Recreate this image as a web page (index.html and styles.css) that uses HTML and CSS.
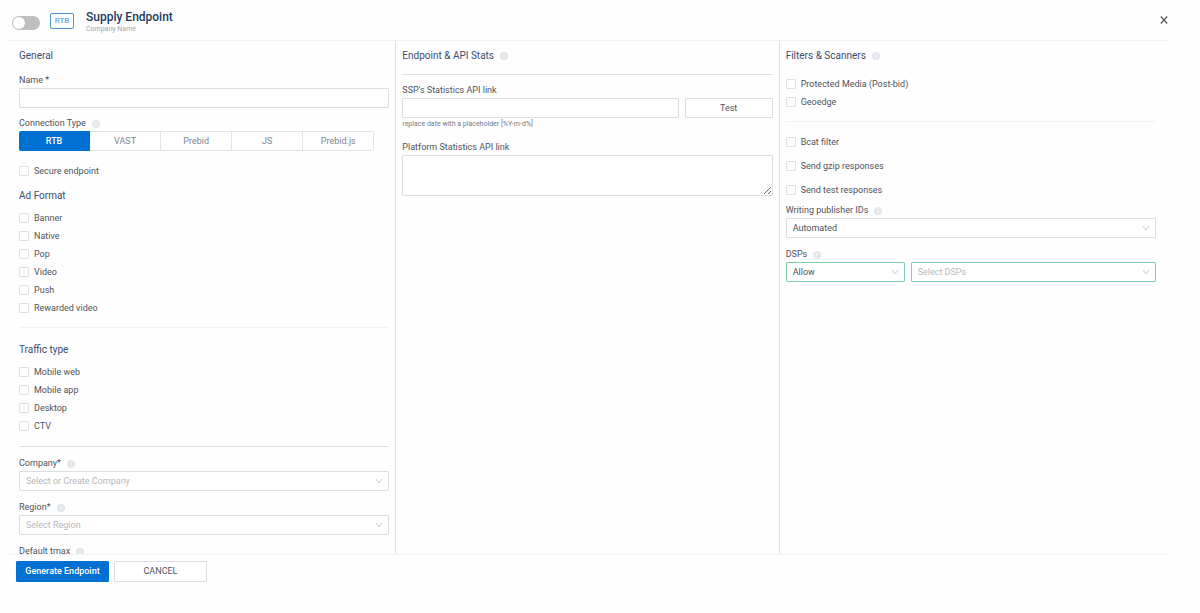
FILE: index.html
```html
<!DOCTYPE html>
<html lang="en">
<head>
<meta charset="utf-8">
<title>Supply Endpoint</title>
<link rel="stylesheet" href="styles.css">
</head>
<body>
<svg class="sprite" aria-hidden="true">
  <symbol id="info" viewBox="0 0 8 8"><circle cx="4" cy="4" r="4" fill="#e4e6e9"/><path d="M4 3.6v2.2M4 2v.9" stroke="#fff" stroke-width=".8"/></symbol>
  <symbol id="chevron" viewBox="0 0 8 8"><path d="M1 2l3 4 3-4" fill="none" stroke="#bfbfbf" stroke-width=".8"/></symbol>
</svg>
<form class="drawer">
  <header class="header">
    <input class="switch" type="checkbox" role="switch" aria-label="Active">
    <span class="badge">RTB</span>
    <div class="titles">
      <h1 class="title">Supply Endpoint</h1>
      <p class="company">Company Name</p>
    </div>
    <button class="close" type="button" aria-label="Close"><svg class="close-icon" viewBox="0 0 8 8"><path d="M.8 .5l6.4 7M7.2 .5l-6.4 7" stroke="#555" stroke-width="1.2"/></svg></button>
  </header>

  <main class="columns">
    <section class="column column-first">
      <h2 class="heading">General</h2>
      <div class="field">
        <label class="label" for="name">Name *</label>
        <input class="control" id="name" type="text">
      </div>
      <div class="field field-close">
        <span class="label" id="conn">Connection Type <svg class="info"><use href="#info"/></svg></span>
        <div class="segments" role="group" aria-labelledby="conn">
          <button class="segment segment-active" type="button">RTB</button>
          <button class="segment" type="button">VAST</button>
          <button class="segment" type="button">Prebid</button>
          <button class="segment" type="button">JS</button>
          <button class="segment" type="button">Prebid.js</button>
        </div>
      </div>
      <div class="checks checks-wide">
        <label class="check"><input class="box" type="checkbox">Secure endpoint</label>
      </div>
      <h2 class="heading heading-next">Ad Format</h2>
      <div class="checks">
        <label class="check"><input class="box" type="checkbox">Banner</label>
        <label class="check"><input class="box" type="checkbox">Native</label>
        <label class="check"><input class="box" type="checkbox">Pop</label>
        <label class="check"><input class="box" type="checkbox">Video</label>
        <label class="check"><input class="box" type="checkbox">Push</label>
        <label class="check"><input class="box" type="checkbox">Rewarded video</label>
      </div>
      <hr class="rule rule-faint">
      <h2 class="heading heading-ruled">Traffic type</h2>
      <div class="checks">
        <label class="check"><input class="box" type="checkbox">Mobile web</label>
        <label class="check"><input class="box" type="checkbox">Mobile app</label>
        <label class="check"><input class="box" type="checkbox">Desktop</label>
        <label class="check"><input class="box" type="checkbox">CTV</label>
      </div>
      <hr class="rule rule-wide">
      <div class="field">
        <label class="label" for="company">Company* <svg class="info"><use href="#info"/></svg></label>
        <div class="select"><select class="control placeholder" id="company"><option>Select or Create Company</option></select><svg class="chevron"><use href="#chevron"/></svg></div>
      </div>
      <div class="field">
        <label class="label" for="region">Region* <svg class="info"><use href="#info"/></svg></label>
        <div class="select"><select class="control placeholder" id="region"><option>Select Region</option></select><svg class="chevron"><use href="#chevron"/></svg></div>
      </div>
      <div class="field">
        <label class="label" for="tmax">Default tmax <svg class="info"><use href="#info"/></svg></label>
        <input class="control" id="tmax" type="text">
      </div>
    </section>

    <section class="column">
      <h2 class="heading">Endpoint &amp; API Stats <svg class="info"><use href="#info"/></svg></h2>
      <hr class="rule">
      <div class="field field-close">
        <label class="label" for="ssp">SSP's Statistics API link</label>
        <div class="row">
          <input class="control" id="ssp" type="text">
          <button class="control test" type="button">Test</button>
        </div>
        <p class="hint">replace date with a placeholder [%Y-m-d%]</p>
      </div>
      <div class="field">
        <label class="label" for="platform">Platform Statistics API link</label>
        <textarea class="control area" id="platform"></textarea>
      </div>
    </section>

    <section class="column column-last">
      <h2 class="heading">Filters &amp; Scanners <svg class="info"><use href="#info"/></svg></h2>
      <div class="checks checks-wide">
        <label class="check"><input class="box" type="checkbox">Protected Media (Post-bid)</label>
        <label class="check"><input class="box" type="checkbox">Geoedge</label>
      </div>
      <hr class="rule rule-faint">
      <div class="checks checks-wide checks-spaced">
        <label class="check"><input class="box" type="checkbox">Bcat filter</label>
        <label class="check"><input class="box" type="checkbox">Send gzip responses</label>
        <label class="check"><input class="box" type="checkbox">Send test responses</label>
      </div>
      <div class="field field-tight">
        <label class="label" for="pub">Writing publisher IDs <svg class="info"><use href="#info"/></svg></label>
        <div class="select"><select class="control" id="pub"><option>Automated</option></select><svg class="chevron"><use href="#chevron"/></svg></div>
      </div>
      <div class="field">
        <label class="label" for="mode">DSPs <svg class="info"><use href="#info"/></svg></label>
        <div class="row">
          <div class="select select-mode"><select class="control valid" id="mode"><option>Allow</option></select><svg class="chevron"><use href="#chevron"/></svg></div>
          <div class="select"><select class="control valid placeholder" aria-label="Select DSPs"><option>Select DSPs</option></select><svg class="chevron"><use href="#chevron"/></svg></div>
        </div>
      </div>
    </section>
  </main>

  <footer class="footer">
    <button class="action action-primary" type="submit">Generate Endpoint</button>
    <button class="action" type="button">CANCEL</button>
  </footer>
</form>
</body>
</html>
```
FILE: styles.css
```css
* { box-sizing: border-box; margin: 0; }

body {
  background: #fefefe;
  color: #50535b;
  font: 9px/15px Roboto, "Liberation Sans", sans-serif;
}

button, input, select, textarea { font: inherit; color: inherit; }
.sprite { display: none; }

.drawer {
  display: flex;
  flex-direction: column;
  height: 100vh;
  padding: 0 32px 0 8px;
}

.header {
  display: flex;
  align-items: center;
  flex: none;
  height: 41px;
  padding: 2px 0 0 4px;
  border-bottom: 1px solid #f2f2f2;
}

.switch {
  appearance: none;
  display: flex;
  align-items: center;
  width: 28px;
  height: 14px;
  margin-top: 3px;
  padding: 1px;
  border-radius: 7px;
  background: #bfbfbf;
}
.switch::before {
  content: "";
  width: 12px;
  height: 12px;
  border-radius: 50%;
  background: #fff;
}
.switch:checked { justify-content: flex-end; background: #0070d2; }

.badge {
  width: 24px;
  margin-left: 10px;
  border: 1px solid #4a94dc;
  border-radius: 2px;
  color: #4a94dc;
  font-size: 8px;
  line-height: 14px;
  text-align: center;
}

.titles { margin-left: 12px; }
.title { color: #223a62; font-size: 12px; font-weight: 500; line-height: 16px; }
.company { color: #a3a7ae; font-size: 7px; line-height: 8px; }

.close {
  display: flex;
  margin: 0 0 3px auto;
  padding: 0;
  border: 0;
  background: none;
}
.close-icon { width: 8px; height: 8px; }

.columns {
  display: flex;
  flex: 1;
  min-height: 0;
  overflow: hidden;
}

.column {
  box-sizing: content-box;
  flex: 1 1 0;
  min-width: 0;
  padding: 7px 6px;
  border-right: 1px solid #dfe0e2;
}
.column-first { padding-left: 11px; }
.column-last { padding-right: 12px; border-right: 0; }

.heading {
  display: flex;
  align-items: center;
  color: #3a4c70;
  font-size: 10px;
  font-weight: 400;
  line-height: 16px;
}
.heading-next { margin-top: 8px; }
.heading-ruled { margin-top: 14px; }

.info { width: 8px; height: 8px; margin-left: 6px; }

.field { margin-top: 9px; }
.field-close { margin-top: 8px; }
.field-tight { margin-top: 4px; }
.label { display: flex; align-items: center; }

.control {
  display: block;
  width: 100%;
  height: 20px;
  padding: 0 6px;
  border: 1px solid #dcdee1;
  border-radius: 1px;
  background: #fff;
}
.area { height: 41px; resize: vertical; }
.valid { border-color: #7fd0a8; }
.placeholder { color: #b5b8bc; }

.row { display: flex; gap: 6px; }
.test { flex: 0 0 88px; }
.hint { color: #747b88; font-size: 7px; line-height: 13px; }

.select { display: grid; flex: 1; align-items: center; }
.select-mode { flex: 0 0 119px; }
.select > * { grid-area: 1 / 1; }
.select .control { appearance: none; }
.chevron {
  justify-self: end;
  width: 8px;
  height: 8px;
  margin-right: 6px;
  pointer-events: none;
}

.segments { display: flex; margin-right: 15px; }
.segment {
  flex: 1;
  height: 20px;
  padding: 0;
  border: 1px solid #e3e5e8;
  border-left-width: 0;
  background: #fff;
  color: #7d8490;
}
.segment:first-child { border-radius: 2px 0 0 2px; }
.segment:last-child { border-radius: 0 2px 2px 0; }
.segment-active { border-color: #0070d2; background: #0070d2; color: #fff; font-weight: 500; }

.checks { display: grid; justify-items: start; margin-top: 5px; }
.checks-wide { margin-top: 11px; }
.checks-spaced { gap: 6px; }
.check { display: flex; align-items: center; gap: 5px; height: 18px; }
.box {
  appearance: none;
  width: 10px;
  height: 10px;
  border: 1px solid #e0e2e4;
  border-radius: 1px;
  background: #fff;
}
.box:checked { background: #0070d2; }

.rule { height: 1px; margin-top: 10px; border: 0; background: #dfe1e3; }
.rule-wide { margin-top: 11px; }
.rule-faint { background: #f2f2f2; }

.footer {
  display: flex;
  flex: none;
  align-items: flex-start;
  gap: 5px;
  height: 59px;
  padding: 6px 8px;
  border-top: 1px solid #f4f4f4;
}
.action {
  width: 93px;
  height: 21px;
  padding: 0;
  border: 1px solid #dcdee1;
  border-radius: 1px;
  background: #fff;
}
.action-primary { border-color: #0070d2; background: #0070d2; color: #fff; font-weight: 500; }
```
